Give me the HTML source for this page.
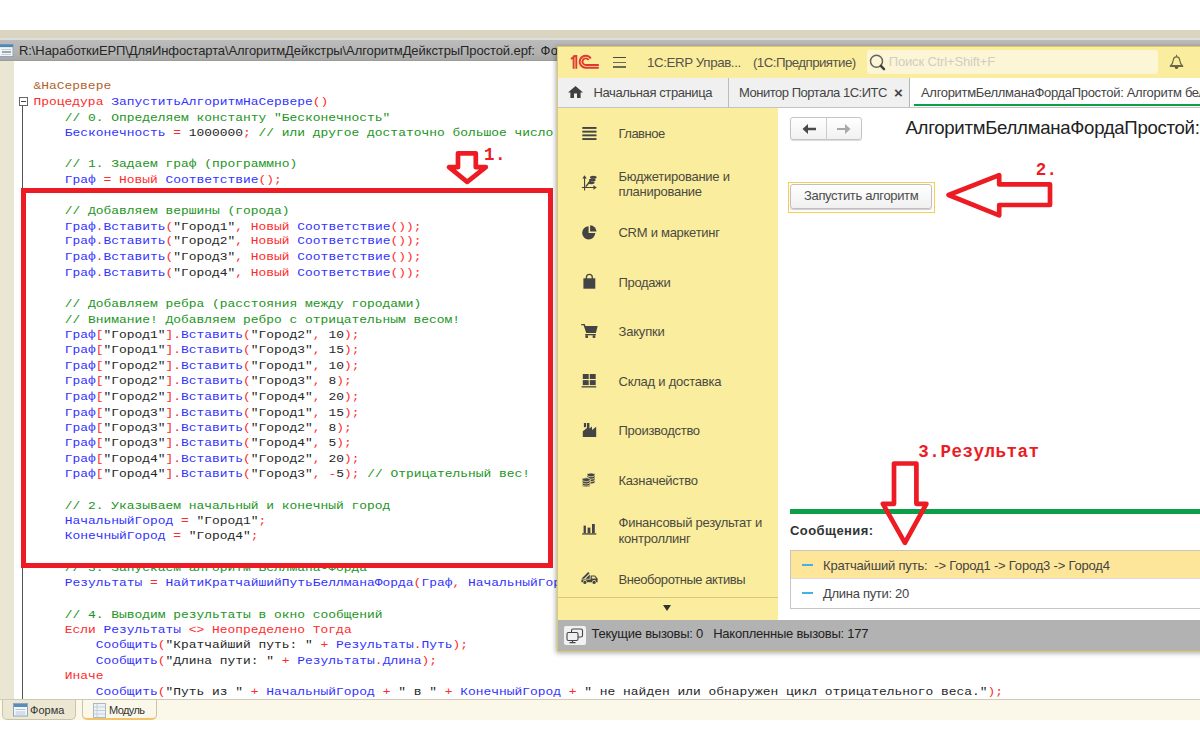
<!DOCTYPE html>
<html lang="ru">
<head>
<meta charset="utf-8">
<title>Алгоритм Беллмана-Форда</title>
<style>
*{box-sizing:border-box}
html,body{margin:0;padding:0}
body{width:1200px;height:750px;position:relative;overflow:hidden;background:#fff;font-family:"Liberation Sans",sans-serif;}
.abs{position:absolute}
#band{left:0;top:30px;width:1200px;height:9px;background:#d9d5c1}
#tbar{left:0;top:38px;width:1200px;height:23px;background:linear-gradient(#dededa 0,#dededa 1.5px,#bcbcbc 2px,#b3b3b3 60%,#a6a6a4 100%);border-bottom:1px solid #9c9c96}
#tbar>span{position:absolute;left:19px;top:5.3px;font-size:13px;color:#262626;white-space:nowrap}
#lmargin{left:0;top:61px;width:14px;height:638px;background:#e9e6d3}
#code{left:33.6px;top:78.74px;margin:0;transform:scaleY(.87);transform-origin:0 0;font-family:"Liberation Mono",monospace;font-size:12.93px;line-height:17.837px;color:#000;white-space:pre}
#code i{font-style:normal}
#code .c{color:#219421}
#code .k{color:#ff2a2a}
#code .b{color:#3232ff}
#code .s{color:#262626}
#code .p{color:#b0632c}
#foldline{left:22px;top:105px;width:1px;height:594px;background:#555}
#foldbox{left:19px;top:97px;width:9px;height:9px;border:1px solid #666;background:#fff}
#foldbox:after{content:"";position:absolute;left:1px;top:3px;width:5px;height:1px;background:#444}
#redbox{left:21px;top:187.8px;width:531.5px;height:380.5px;border:5px solid #ed1c24}
#btabs{left:0;top:699px;width:1200px;height:21px;background:#fbf8ea;border-top:1px solid #cfcbb8}
.bt{position:absolute;top:0;height:20px;border:1px solid #c9c4a6;border-top:none;border-radius:0 0 5px 5px;font-size:11px;color:#333;white-space:nowrap}
.bt span{position:absolute;top:3.5px}
.ann{font-family:"Liberation Mono",monospace;font-weight:bold;color:#ed1c24;white-space:nowrap}
#onec{left:557px;top:46px;width:660px;height:606px;background:#fff;border:1px solid #dcca68;box-shadow:-1px 1px 5px rgba(0,0,0,.35)}
#ohead{left:0;top:0;width:660px;height:31px;background:#fbed9e}
.hb{left:54.8px;width:13.6px;height:1.5px;background:#4a4a48}
.ht{top:8px;font-size:13.3px;color:#55534a;white-space:nowrap}
#search{left:308.7px;top:2.8px;width:291.3px;height:24.5px;background:#fdf6d6;border-radius:3px}
#t3{left:22px;top:4.5px;font-size:13px;color:#d0cdc4;white-space:nowrap}
#otabs{left:0;top:31px;width:660px;height:30px;background:#f0f0f0;border-bottom:1px solid #c4c4c4}
.tt{top:7px;font-size:13px;color:#444;white-space:nowrap}
#atab{left:351px;top:0;width:320px;height:29px;background:#fff;border-left:1px solid #b6b6b6;overflow:hidden}
#atab:after{content:"";position:absolute;left:4px;right:0;top:26px;height:2px;background:#0a9f48}
#oside{left:0;top:61px;width:220.5px;height:513px;background:#fbed9e;border-right:1px solid #e6d98f}
.it{position:absolute;left:60.5px;transform:translateY(-50%);font-size:13px;line-height:15.5px;color:#4a4a40;white-space:nowrap}
#omain{left:220px;top:61px;width:440px;height:513px;background:#fff;overflow:hidden}
#nav{left:12px;top:8.5px;width:72px;height:23.5px;border:1px solid #c4c4c4;border-radius:3px;background:linear-gradient(#fff,#f1f1f1);box-shadow:0 1px 1px rgba(0,0,0,.15)}
#runfocus{left:9.5px;top:73.6px;width:147px;height:31.6px;border:1.3px solid #f6cf4e;background:#fff}
#run{left:12px;top:76.2px;width:142px;height:24.8px;border:1px solid #c0c0c0;border-radius:3px;background:linear-gradient(#fff,#f0f0f0);box-shadow:0 1px 1px rgba(0,0,0,.2);font-size:13px;color:#4c4c4c;line-height:22.5px;padding-left:13px;white-space:nowrap}
#msgs{left:12px;top:442px;width:420px;height:58.8px;border:1px solid #c6c6c6;border-right:none;background:#fff}
.dash{left:11px;width:10.5px;height:2px;background:#45b0e6}
.mt{left:32px;font-size:13px;color:#444;white-space:nowrap}
#ostat{left:0;top:573.4px;width:660px;height:30.6px;background:#b2b2b2}

#t1{letter-spacing:-0.379px}
#t2{letter-spacing:-0.556px}
#t3{letter-spacing:-0.150px}
#t4{letter-spacing:-0.400px}
#t5{letter-spacing:-0.474px}
#t8{letter-spacing:-0.340px}
#t9{letter-spacing:0.423px}
#t10{letter-spacing:-0.188px}
#t11{letter-spacing:-0.295px}
#t12{letter-spacing:-0.236px}
#tt0{letter-spacing:-0.092px}
#s1{letter-spacing:-0.510px}
#s2{letter-spacing:-0.256px}
#s3{letter-spacing:-0.271px}
#s4{letter-spacing:-0.342px}
#s5{letter-spacing:-0.187px}
#s6{letter-spacing:-0.242px}
#s7{letter-spacing:-0.289px}
#s8{letter-spacing:-0.271px}
#s9{letter-spacing:-0.248px}
#s10{letter-spacing:-0.438px}
#bt1{letter-spacing:0.044px}
#bt2{letter-spacing:-0.583px}
#t6{letter-spacing:-0.311px}
#t7a{letter-spacing:-0.289px}
</style>
</head>
<body>
<div id="band" class="abs"></div>
<div id="tbar" class="abs"><svg class="abs" style="left:0;top:6px" width="14" height="13" viewBox="0 0 14 13"><rect x="-2" y="0.5" width="15" height="12" fill="#f2f5f8" stroke="#8aa6c0"/><rect x="-2" y="0.5" width="15" height="2.6" fill="#4f86b4"/><path d="M1.5 5.5 H11 M1.5 10.5 H11" stroke="#c3cdd6" stroke-width="1"/><path d="M2 8 H11" stroke="#555" stroke-width="1"/></svg><span><span id="tt0">R:\НаработкиЕРП\ДляИнфостарта\АлгоритмДейкстры\АлгоритмДейкстрыПростой.epf:</span><span style="margin-left:5.5px;letter-spacing:0.5px">Форма</span></span></div>
<div id="lmargin" class="abs"></div>
<div id="foldline" class="abs"></div>
<div id="foldbox" class="abs"></div>
<pre id="code" class="abs"><i class="p">&amp;НаСервере</i>
<i class="k">Процедура</i> <i class="b">ЗапуститьАлгоритмНаСервере</i><i class="k">(</i><i class="k">)</i>
    <i class="c">// 0. Определяем константу "Бесконечность"</i>
    <i class="b">Бесконечность</i> <i class="k">=</i> <i class="s">1000000</i><i class="k">;</i> <i class="c">// или другое достаточно большое число</i>

    <i class="c">// 1. Задаем граф (программно)</i>
    <i class="b">Граф</i> <i class="k">=</i> <i class="k">Новый</i> <i class="b">Соответствие</i><i class="k">(</i><i class="k">)</i><i class="k">;</i>

    <i class="c">// Добавляем вершины (города)</i>
    <i class="b">Граф</i><i class="k">.</i><i class="b">Вставить</i><i class="k">(</i><i class="s">"Город1"</i><i class="k">,</i> <i class="k">Новый</i> <i class="b">Соответствие</i><i class="k">(</i><i class="k">)</i><i class="k">)</i><i class="k">;</i>
    <i class="b">Граф</i><i class="k">.</i><i class="b">Вставить</i><i class="k">(</i><i class="s">"Город2"</i><i class="k">,</i> <i class="k">Новый</i> <i class="b">Соответствие</i><i class="k">(</i><i class="k">)</i><i class="k">)</i><i class="k">;</i>
    <i class="b">Граф</i><i class="k">.</i><i class="b">Вставить</i><i class="k">(</i><i class="s">"Город3"</i><i class="k">,</i> <i class="k">Новый</i> <i class="b">Соответствие</i><i class="k">(</i><i class="k">)</i><i class="k">)</i><i class="k">;</i>
    <i class="b">Граф</i><i class="k">.</i><i class="b">Вставить</i><i class="k">(</i><i class="s">"Город4"</i><i class="k">,</i> <i class="k">Новый</i> <i class="b">Соответствие</i><i class="k">(</i><i class="k">)</i><i class="k">)</i><i class="k">;</i>

    <i class="c">// Добавляем ребра (расстояния между городами)</i>
    <i class="c">// Внимание! Добавляем ребро с отрицательным весом!</i>
    <i class="b">Граф</i><i class="k">[</i><i class="s">"Город1"</i><i class="k">]</i><i class="k">.</i><i class="b">Вставить</i><i class="k">(</i><i class="s">"Город2"</i><i class="k">,</i> <i class="s">10</i><i class="k">)</i><i class="k">;</i>
    <i class="b">Граф</i><i class="k">[</i><i class="s">"Город1"</i><i class="k">]</i><i class="k">.</i><i class="b">Вставить</i><i class="k">(</i><i class="s">"Город3"</i><i class="k">,</i> <i class="s">15</i><i class="k">)</i><i class="k">;</i>
    <i class="b">Граф</i><i class="k">[</i><i class="s">"Город2"</i><i class="k">]</i><i class="k">.</i><i class="b">Вставить</i><i class="k">(</i><i class="s">"Город1"</i><i class="k">,</i> <i class="s">10</i><i class="k">)</i><i class="k">;</i>
    <i class="b">Граф</i><i class="k">[</i><i class="s">"Город2"</i><i class="k">]</i><i class="k">.</i><i class="b">Вставить</i><i class="k">(</i><i class="s">"Город3"</i><i class="k">,</i> <i class="s">8</i><i class="k">)</i><i class="k">;</i>
    <i class="b">Граф</i><i class="k">[</i><i class="s">"Город2"</i><i class="k">]</i><i class="k">.</i><i class="b">Вставить</i><i class="k">(</i><i class="s">"Город4"</i><i class="k">,</i> <i class="s">20</i><i class="k">)</i><i class="k">;</i>
    <i class="b">Граф</i><i class="k">[</i><i class="s">"Город3"</i><i class="k">]</i><i class="k">.</i><i class="b">Вставить</i><i class="k">(</i><i class="s">"Город1"</i><i class="k">,</i> <i class="s">15</i><i class="k">)</i><i class="k">;</i>
    <i class="b">Граф</i><i class="k">[</i><i class="s">"Город3"</i><i class="k">]</i><i class="k">.</i><i class="b">Вставить</i><i class="k">(</i><i class="s">"Город2"</i><i class="k">,</i> <i class="s">8</i><i class="k">)</i><i class="k">;</i>
    <i class="b">Граф</i><i class="k">[</i><i class="s">"Город3"</i><i class="k">]</i><i class="k">.</i><i class="b">Вставить</i><i class="k">(</i><i class="s">"Город4"</i><i class="k">,</i> <i class="s">5</i><i class="k">)</i><i class="k">;</i>
    <i class="b">Граф</i><i class="k">[</i><i class="s">"Город4"</i><i class="k">]</i><i class="k">.</i><i class="b">Вставить</i><i class="k">(</i><i class="s">"Город2"</i><i class="k">,</i> <i class="s">20</i><i class="k">)</i><i class="k">;</i>
    <i class="b">Граф</i><i class="k">[</i><i class="s">"Город4"</i><i class="k">]</i><i class="k">.</i><i class="b">Вставить</i><i class="k">(</i><i class="s">"Город3"</i><i class="k">,</i> <i class="k">-</i><i class="s">5</i><i class="k">)</i><i class="k">;</i> <i class="c">// Отрицательный вес!</i>

    <i class="c">// 2. Указываем начальный и конечный город</i>
    <i class="b">НачальныйГород</i> <i class="k">=</i> <i class="s">"Город1"</i><i class="k">;</i>
    <i class="b">КонечныйГород</i> <i class="k">=</i> <i class="s">"Город4"</i><i class="k">;</i>

    <i class="c">// 3. Запускаем алгоритм Беллмана-Форда</i>
    <i class="b">Результаты</i> <i class="k">=</i> <i class="b">НайтиКратчайшийПутьБеллманаФорда</i><i class="k">(</i><i class="b">Граф</i><i class="k">,</i> <i class="b">НачальныйГород</i><i class="k">,</i> <i class="b">КонечныйГород</i><i class="k">)</i><i class="k">;</i>

    <i class="c">// 4. Выводим результаты в окно сообщений</i>
    <i class="k">Если</i> <i class="b">Результаты</i> <i class="k">&lt;</i><i class="k">&gt;</i> <i class="k">Неопределено</i> <i class="k">Тогда</i>
        <i class="b">Сообщить</i><i class="k">(</i><i class="s">"Кратчайший путь: "</i> <i class="k">+</i> <i class="b">Результаты</i><i class="k">.</i><i class="b">Путь</i><i class="k">)</i><i class="k">;</i>
        <i class="b">Сообщить</i><i class="k">(</i><i class="s">"Длина пути: "</i> <i class="k">+</i> <i class="b">Результаты</i><i class="k">.</i><i class="b">Длина</i><i class="k">)</i><i class="k">;</i>
    <i class="k">Иначе</i>
        <i class="b">Сообщить</i><i class="k">(</i><i class="s">"Путь из "</i> <i class="k">+</i> <i class="b">НачальныйГород</i> <i class="k">+</i> <i class="s">" в "</i> <i class="k">+</i> <i class="b">КонечныйГород</i> <i class="k">+</i> <i class="s">" не найден или обнаружен цикл отрицательного веса."</i><i class="k">)</i><i class="k">;</i></pre>
<div id="redbox" class="abs"></div>
<div id="btabs" class="abs">
  <div class="bt" style="left:1.5px;width:74.5px;background:#ebe7d2"><svg class="abs" style="left:10px;top:3px" width="15" height="14" viewBox="0 0 15 14"><rect x="0.5" y="0.5" width="14" height="12.5" fill="#f4f7fa" stroke="#8aa6c0"/><rect x="1" y="1" width="13" height="3" fill="#5a8cb8"/><path d="M2.5 6.5 H12.5 M2.5 9 H12.5 M2.5 11 H12.5" stroke="#b8c6d4" stroke-width="1"/></svg><span id="bt1" style="left:27.5px">Форма</span></div>
  <div class="bt" style="left:81.5px;width:75.5px;background:#fbf8ea;border-bottom:2px solid #f3c36a"><svg class="abs" style="left:10px;top:2.5px" width="13" height="15" viewBox="0 0 13 15"><rect x="0.5" y="0.5" width="12" height="14" fill="#eef2f6" stroke="#a9b9c8"/><path d="M1 4 H12 M1 7.5 H12 M1 11 H12 M4 1 V14" stroke="#c3cfda" stroke-width="1"/></svg><span id="bt2" style="left:26.5px">Модуль</span></div>
</div>
<div id="onec" class="abs">
  <div id="ohead" class="abs">
    <svg class="abs" style="left:12px;top:7px" width="30" height="16" viewBox="570 54 30 16">
      <g fill="none" stroke="#e03a2e" stroke-width="1.9">
        <path d="M571 59 L573.6 57 V68.8"/>
        <path d="M576.3 55 V68.8"/>
        <path d="M573.2 56.2 H577"/>
        <path d="M598.8 67.7 H585.7 A6 6 0 1 1 590.8 58.5"/>
        <path d="M598.8 65 H585.8 A3.3 3.3 0 1 1 588.6 60"/>
      </g>
    </svg>
    <div class="abs hb" style="top:9.6px"></div><div class="abs hb" style="top:14.5px;opacity:.8"></div><div class="abs hb" style="top:19.4px;opacity:.8"></div>
    <span id="t1" class="abs ht" style="left:89px">1С:ERP Управ...</span>
    <span id="t2" class="abs ht" style="left:195px">(1С:Предприятие)</span>
    <div id="search" class="abs">
      <svg class="abs" style="left:2.5px;top:4px" width="19" height="19" viewBox="0 0 19 19"><circle cx="7.5" cy="7.3" r="6" fill="none" stroke="#66655c" stroke-width="1.5"/><path d="M11.9 11.8 L15 15.1" stroke="#44443e" stroke-width="2.5" stroke-linecap="round"/></svg>
      <span id="t3" class="abs">Поиск Ctrl+Shift+F</span>
    </div>
    <svg class="abs" style="left:609px;top:6px" width="19" height="18" viewBox="1167 53 19 18"><g stroke="#6b6648" fill="none" stroke-width="1.15"><path d="M1170.2 66.3 C1172.7 64.3 1173.1 62 1173.4 59.6 C1173.7 57.4 1175 56.8 1176.5 56.8 C1178 56.8 1179.3 57.4 1179.6 59.6 C1179.9 62 1180.3 64.3 1182.8 66.3 Z" stroke-linejoin="round"/><path d="M1176.5 54.8 V56.8"/></g><path d="M1171.6 65 H1181.4 L1182.6 66.6 H1170.4 Z" fill="#6b6648"/><path d="M1174.6 67 A1.9 1.9 0 0 0 1178.4 67 Z" fill="#5c5840"/></svg>
  </div>
  <div id="otabs" class="abs">
    <svg class="abs" style="left:10px;top:8px" width="15" height="12" viewBox="0 0 15 12"><path d="M7.5 0 L15 6.4 H12.6 V12 H9 V7.6 H6 V12 H2.4 V6.4 H0 Z" fill="#404040"/></svg>
    <span id="t4" class="abs tt" style="left:35.5px">Начальная страница</span>
    <div class="abs" style="left:170px;top:0;width:1px;height:30px;background:#bdbdbd"></div>
    <span id="t5" class="abs tt" style="left:181px">Монитор Портала 1С:ИТС</span>
    <span id="t5x" class="abs" style="left:336px;top:5.5px;font-size:15px;font-weight:bold;color:#444">×</span>
    <div id="atab" class="abs"><span class="abs tt" style="left:11px"><span id="t6">АлгоритмБеллманаФордаПростой: Алгоритм </span><span style="letter-spacing:-0.4px">беллмана</span></span></div>
  </div>
  <div id="oside" class="abs">
    <div class="it" style="top:26.2px"><span id="s1">Главное</span></div>
    <div class="it" style="top:75.5px"><span id="s2">Бюджетирование и<br>планирование</span></div>
    <div class="it" style="top:125.2px"><span id="s3">CRM и маркетинг</span></div>
    <div class="it" style="top:174.7px"><span id="s4">Продажи</span></div>
    <div class="it" style="top:224.2px"><span id="s5">Закупки</span></div>
    <div class="it" style="top:273.7px"><span id="s6">Склад и доставка</span></div>
    <div class="it" style="top:323.2px"><span id="s7">Производство</span></div>
    <div class="it" style="top:372.7px"><span id="s8">Казначейство</span></div>
    <div class="it" style="top:422px"><span id="s9">Финансовый результат и<br>контроллинг</span></div>
    <div class="it" style="top:471.7px"><span id="s10">Внеоборотные активы</span></div>
    <div class="abs" style="left:0;top:489px;width:220px;height:1px;background:#d9c777"></div>
    <div class="abs" style="left:105px;top:497px;width:0;height:0;border-left:4.5px solid transparent;border-right:4.5px solid transparent;border-top:6px solid #333"></div>
    <svg class="abs" style="left:0;top:0" width="60" height="513" viewBox="558 108 60 513">
  <g fill="#444" stroke="none">
    <!-- main: 4 bars -->
    <rect x="582.3" y="127" width="14.2" height="1.9"/><rect x="582.3" y="130.7" width="14.2" height="1.9"/><rect x="582.3" y="134.4" width="14.2" height="1.9"/><rect x="582.3" y="138.1" width="14.2" height="1.9"/>
    <!-- budget -->
    <path d="M584 177.5 h1.1 v9.4 h8.6 v1.1 h-8.6 v2.4 h-1.1 v-2.4 h-2.2 v-1.1 h2.2 z"/>
    <path d="M582.3 178.6 L584.55 175.2 L586.8 178.6 Z"/>
    <path d="M593.4 185.2 L596.8 187.45 L593.4 189.7 Z"/>
    <path d="M585.2 186.2 L591.5 178.6 L592.6 179.6 L586.3 187.0 Z"/>
    <ellipse cx="593.3" cy="177.2" rx="3.3" ry="1.5"/><ellipse cx="592.3" cy="180" rx="3.3" ry="1.5"/><ellipse cx="591.3" cy="182.8" rx="3.3" ry="1.4"/>
    <!-- pie -->
    <path d="M588.6 226.2 A6.6 6.6 0 1 0 595.3 233.1 H588.6 Z"/>
    <path d="M590.1 225.3 A6.4 6.4 0 0 1 596.5 231.6 H590.1 Z"/>
    <!-- bag -->
    <path d="M583.4 278.3 H595.3 V288.7 H583.4 Z"/>
    <path d="M586.4 279.5 V277.3 A2.95 2.95 0 0 1 592.3 277.3 V279.5" fill="none" stroke="#444" stroke-width="1.3"/>
    <!-- cart -->
    <path d="M581.2 324 H584.6 L585.5 326 H597.7 L595.9 333 H586.2 L583.6 325.2 H581.2 Z"/>
    <rect x="585.2" y="334" width="10.6" height="1.3"/>
    <rect x="585.4" y="335.3" width="2.6" height="2.6"/><rect x="592.7" y="335.3" width="2.6" height="2.6"/>
    <!-- warehouse -->
    <rect x="582.8" y="374" width="5.9" height="5"/><rect x="589.8" y="374" width="5.9" height="5"/>
    <rect x="582.8" y="380.1" width="5.9" height="5"/><rect x="589.8" y="380.1" width="5.9" height="5"/>
    <rect x="581.6" y="386.2" width="14.6" height="1.3"/>
    <!-- factory -->
    <path d="M582.8 436.9 V431.2 L587 427.9 V423 H589.4 V428.6 L592 426.6 V430 L596.2 426.8 V436.9 Z"/>
    <rect x="583.9" y="423" width="2.2" height="4.2"/>
    <!-- coins -->
    <g stroke="#fbed9e" stroke-width="0.7">
      <path d="M587 474.8 a4 1.9 0 0 1 8 0 v7.2 a4 1.9 0 0 1 -8 0 z"/>
      <ellipse cx="591" cy="474.9" rx="4" ry="1.9"/><path d="M587 477.3 a4 1.9 0 0 0 8 0 M587 479.7 a4 1.9 0 0 0 8 0" fill="none"/>
      <path d="M582.2 479.6 a4 1.9 0 0 1 8 0 v5.6 a4 1.9 0 0 1 -8 0 z"/>
      <ellipse cx="586.2" cy="479.7" rx="4" ry="1.9"/><path d="M582.2 482 a4 1.9 0 0 0 8 0 M582.2 484.2 a4 1.9 0 0 0 8 0" fill="none"/>
    </g>
    <!-- bars -->
    <rect x="582.1" y="533.3" width="14.2" height="1.3"/>
    <rect x="583.6" y="525.6" width="2.3" height="7.7"/><rect x="587.6" y="527.6" width="2.8" height="5.7"/><rect x="592" y="524" width="2.8" height="9.3"/>
    <!-- truck -->
    <path d="M590.6 575.4 H595 L597.6 578.4 V582.2 H596.2 A2.1 2.1 0 0 0 592 582.2 H587 A2.1 2.1 0 0 0 582.8 582.2 H581.4 V579.6 H590.6 Z"/>
    <path d="M581.4 578.8 L588.2 572 L589.6 573.2 L584 578.8 Z"/>
    <path d="M585.4 578.8 L589.8 574.6 V578.8 Z"/>
    <circle cx="584.9" cy="582.4" r="1.6"/><circle cx="594.1" cy="582.4" r="1.6"/>
    <path d="M591.8 576.5 H594.4 L596.2 578.6 H591.8 Z" fill="#fbed9e"/>
  </g>
</svg>

  </div>
  <div id="omain" class="abs">
    <div id="nav" class="abs"><div class="abs" style="left:34.5px;top:0;width:1px;height:22px;background:#cccccc"></div>
      <svg class="abs" style="left:11px;top:5px" width="15" height="12" viewBox="0 0 15 12"><path d="M0.5 6 L6 1 V4.7 H14 V7.3 H6 V11 Z" fill="#4a4a4a"/></svg>
      <svg class="abs" style="left:45px;top:5px" width="15" height="12" viewBox="0 0 15 12"><path d="M14.5 6 L9 1 V4.9 H1 V7.1 H9 V11 Z" fill="#a8a8a8"/></svg>
    </div>
    <span id="t7" class="abs" style="left:127.5px;top:9px;font-size:18.6px;color:#222;white-space:nowrap"><span id="t7a">АлгоритмБеллманаФордаПростой:</span> Алгоритм беллмана</span>
    <div id="runfocus" class="abs"></div>
    <div id="run" class="abs"><span id="t8">Запустить алгоритм</span></div>
    <div class="abs" style="left:12px;top:400.5px;width:420px;height:5px;background:#0a9f48"></div>
    <span id="t9" class="abs" style="left:12px;top:415px;font-size:13px;font-weight:bold;color:#333">Сообщения:</span>
    <div id="msgs" class="abs">
      <div class="abs" style="left:0;top:0;width:420px;height:26.6px;background:#fde699"></div>
      <div class="abs" style="left:0;top:26.6px;width:420px;height:1px;background:#ddd"></div>
      <div class="abs dash" style="top:13px"></div><div class="abs dash" style="top:41px"></div>
      <span id="t10" class="abs mt" style="top:7.1px">Кратчайший путь:&nbsp; -&gt; Город1 -&gt; Город3 -&gt; Город4</span>
      <span id="t11" class="abs mt" style="top:35.1px">Длина пути: 20</span>
    </div>
  </div>
  <div id="ostat" class="abs">
    <div class="abs" style="left:6px;top:6px;width:22px;height:19px;background:#f1f1f1;border-radius:2px"></div>
    <svg class="abs" style="left:8px;top:8px" width="18" height="16" viewBox="0 0 18 16"><g fill="#f1f1f1" stroke="#444" stroke-width="1.1"><rect x="5.5" y="1" width="11" height="8" rx="1.5"/><rect x="1" y="4.5" width="11" height="8" rx="1.5"/></g><path d="M6.5 12.5 V14.5 M3.5 14.7 H9.5" stroke="#444" stroke-width="1.2" fill="none"/></svg>
    <span id="t12" class="abs" style="left:33.5px;top:6px;font-size:13px;color:#222;white-space:pre">Текущие вызовы: 0   Накопленные вызовы: 177</span>
  </div>
</div>

<svg id="annot" class="abs" style="left:0;top:0" width="1200" height="750" viewBox="0 0 1200 750">
  <g fill="none" stroke="#ed1c24" stroke-width="4.7" stroke-linejoin="round">
    <path d="M458 153.3 H475.8 V167.2 H485.8 L467.2 181.8 L449 167.2 H458 Z"/>
    <path d="M1050 184.4 V205 H999.2 V215.4 L948.6 195 L999.2 175.1 V184.4 Z"/>
    <path d="M894 463.5 H916.4 V503.8 H926.4 L904.9 542.8 L882.9 503.8 H894 Z"/>
  </g>
  <g font-family="'Liberation Mono',monospace" font-weight="bold" fill="#ed1c24">
    <text x="484.1" y="160.1" font-size="17.5" letter-spacing="0.3">1.</text>
    <text x="1035.7" y="174.9" font-size="17.5" letter-spacing="0.3">2.</text>
    <text x="918.3" y="456.6" font-size="17.5" letter-spacing="0.5" xml:space="preserve">3.<tspan font-size="0.1" letter-spacing="0"> </tspan>Результат</text>
  </g>
</svg>

</body>
</html>
